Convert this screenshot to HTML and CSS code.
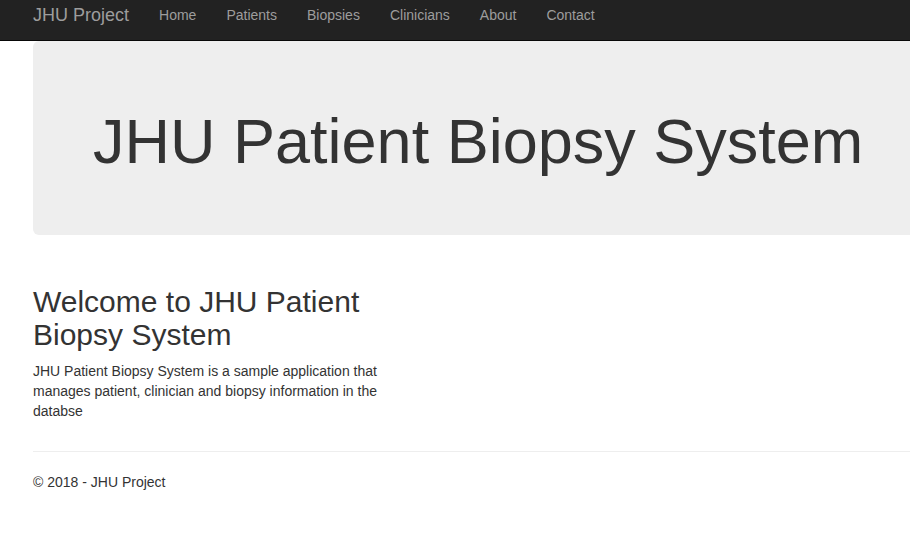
FILE: index.html
```html
<!DOCTYPE html>
<html lang="en">
<head>
<meta charset="utf-8">
<title>JHU Patient Biopsy System</title>
<link rel="stylesheet" href="styles.css">
</head>
<body>
<nav class="navbar">
  <div class="container nav-inner">
    <a class="brand" href="#">JHU Project</a>
    <ul class="nav-links">
      <li><a href="#">Home</a></li>
      <li><a href="#">Patients</a></li>
      <li><a href="#">Biopsies</a></li>
      <li><a href="#">Clinicians</a></li>
      <li><a href="#">About</a></li>
      <li><a href="#">Contact</a></li>
    </ul>
  </div>
</nav>
<div class="container body-content">
  <div class="jumbotron">
    <h1>JHU Patient Biopsy System</h1>
  </div>
  <div class="row">
    <div class="col">
      <h2>Welcome to JHU Patient Biopsy System</h2>
      <p>JHU Patient Biopsy System is a sample application that manages patient, clinician and biopsy information in the databse</p>
    </div>
  </div>
  <hr>
  <footer>
    <p>&copy; 2018 - JHU Project</p>
  </footer>
</div>
</body>
</html>
```
FILE: styles.css
```css
html, body {
  margin: 0;
  padding: 0;
  overflow-x: hidden;
}
body {
  font-family: "Liberation Sans", Arial, Helvetica, sans-serif;
  font-size: 14px;
  line-height: 20px;
  color: #333;
  background: #fff;
}
.container {
  width: 1170px;
  box-sizing: border-box;
  padding: 0 15px;
  margin-left: 18px;
}
.navbar {
  background: #222;
  border-bottom: 1px solid #080808;
  height: 40px;
}
.nav-inner {
  display: flex;
  align-items: flex-start;
}
.brand {
  display: block;
  margin-left: -15px;
  padding: 5px 15px 15px;
  font-size: 18px;
  line-height: 20px;
  color: #9d9d9d;
  text-decoration: none;
}
.nav-links {
  display: flex;
  list-style: none;
  margin: 0;
  padding: 0;
}
.nav-links a {
  display: block;
  padding: 5px 15px 15px;
  line-height: 20px;
  color: #9d9d9d;
  text-decoration: none;
}
.jumbotron {
  background: #eee;
  border-radius: 6px;
  padding: 48px 60px;
  margin-bottom: 30px;
}
.jumbotron h1 {
  font-size: 63px;
  font-weight: 500;
  line-height: 1.1;
  margin: 18px 0 11px;
  color: #333;
}
.row {
  display: flex;
}
.col {
  width: 360px;
}
h2 {
  font-size: 30px;
  font-weight: 500;
  line-height: 1.1;
  margin: 20px 0 10px;
}
p {
  margin: 0 0 10px;
}
hr {
  border: 0;
  border-top: 1px solid #eee;
  margin: 20px 0;
}
```
